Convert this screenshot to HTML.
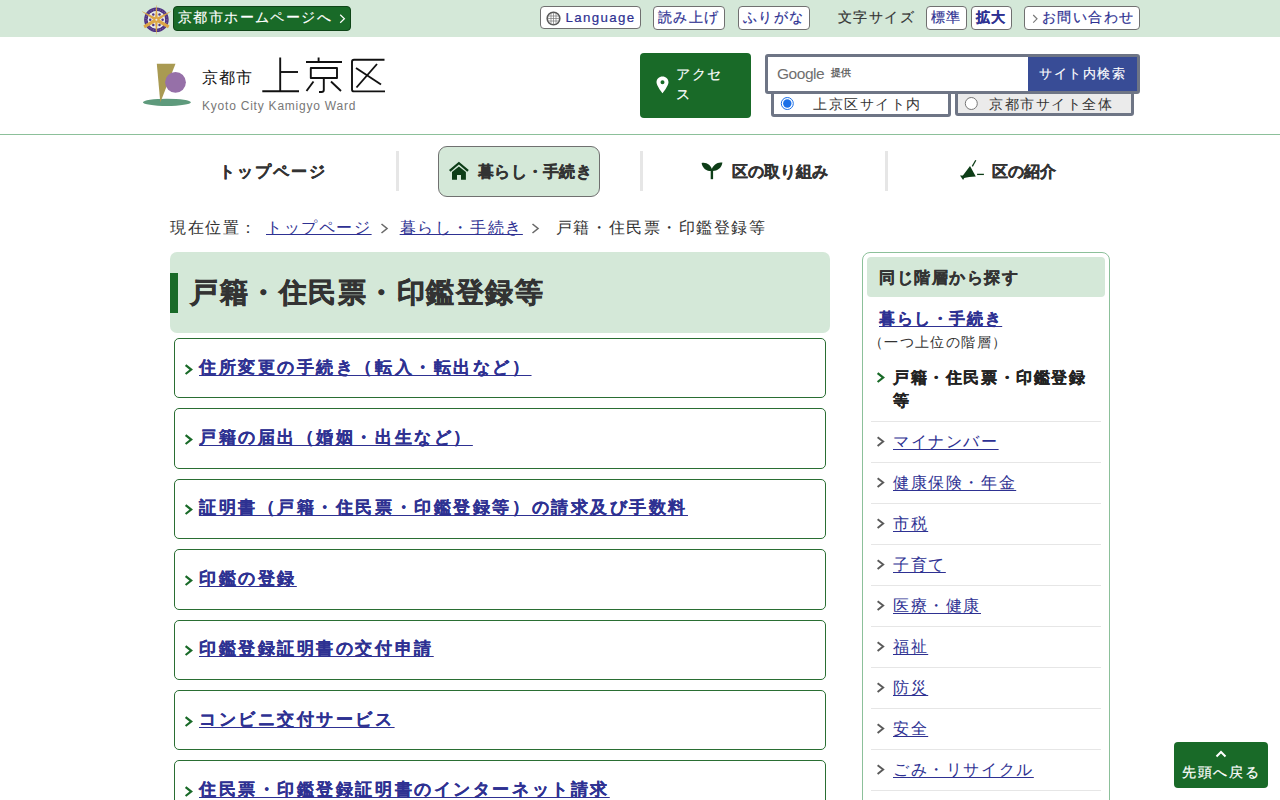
<!DOCTYPE html>
<html lang="ja">
<head>
<meta charset="utf-8">
<style>
*{box-sizing:border-box;margin:0;padding:0}
html,body{width:1280px;height:800px;overflow:hidden;background:#fff}
body{font-family:"Liberation Sans",sans-serif;color:#333;position:relative}
.abs{position:absolute}
#topbar{position:absolute;left:0;top:0;width:1280px;height:37px;background:#d4e8d8}
.tbtn{position:absolute;top:6px;height:24px;background:#fff;border:1px solid #707070;border-radius:4px;color:#2e3192;font-size:14px;letter-spacing:1.4px;line-height:21px;white-space:nowrap;-webkit-text-stroke:0.2px #2e3192}
#header{position:absolute;left:0;top:37px;width:1280px;height:98px;border-bottom:1px solid #8cc09a}
#nav{position:absolute;left:150px;top:135px;width:980px;height:70px}
.navc{position:absolute;top:0;height:70px;font-size:16px;font-weight:bold;color:#333;white-space:nowrap;-webkit-text-stroke:0.3px #333}
.sep{position:absolute;top:16px;width:3px;height:40px;background:#e6e6e6}
a{color:#2e3192}
#crumb{position:absolute;left:170px;top:214.5px;font-size:16px;letter-spacing:1.6px;line-height:26px;white-space:nowrap}
#crumb a{text-decoration:underline;text-underline-offset:1px;text-decoration-thickness:1.2px}
#crumb .gt{color:#707070;margin:0 4.5px 0 8.5px;letter-spacing:0}
#h1box{position:absolute;left:170px;top:252px;width:660px;height:81px;background:#d4e8d8;border-radius:7px}
#h1box .bar{position:absolute;left:0;top:21px;width:8px;height:40px;background:#196a28}
#h1box h1{position:absolute;left:20px;top:20px;font-size:27.5px;font-weight:bold;letter-spacing:1.55px;line-height:42px;color:#333;white-space:nowrap;-webkit-text-stroke:0.6px #333}
.lbox{position:absolute;left:174px;width:652px;height:60.4px;border:1px solid #2a6e33;border-radius:5px}
.lbox a{position:absolute;left:24px;top:15.7px;font-size:16.8px;font-weight:bold;letter-spacing:2.56px;line-height:26.4px;white-space:nowrap;color:#2e3192;text-decoration:underline;text-decoration-thickness:1.4px;text-underline-offset:2px;-webkit-text-stroke:0.15px #2e3192}
.chev{position:absolute}
#side{position:absolute;left:862px;top:252px;width:248px;height:600px;border:1px solid #8cc09a;border-radius:8px}
#side .hd{position:absolute;left:4px;top:4px;width:238px;height:40px;background:#d4e8d8;border-radius:4px;font-size:16px;font-weight:bold;letter-spacing:1.5px;line-height:41px;padding-left:12px;color:#333;-webkit-text-stroke:0.3px #333}
.sitem{position:absolute;left:8px;width:230px;border-bottom:1px solid #e6e6e6}
.sitem a{position:absolute;left:22px;font-size:16px;letter-spacing:1.6px;line-height:26px;white-space:nowrap;text-decoration:underline;text-underline-offset:2px;text-decoration-thickness:1.2px}
#totop{position:absolute;left:1174px;top:742px;width:94px;height:46px;background:#196a28;border-radius:4px;color:#fff;font-size:14px;letter-spacing:1.4px;-webkit-text-stroke:0.2px #fff}
</style>
</head>
<body>
<div id="topbar">
<svg class="abs" style="left:142px;top:5px" width="30" height="31" viewBox="0 0 30 31">
<circle cx="14.4" cy="14.75" r="10.5" fill="none" stroke="#4f3384" stroke-width="3.6"/>
<circle cx="14.4" cy="14.75" r="10.5" fill="none" stroke="#9a88a8" stroke-width="1.2" stroke-dasharray="0.8 1.6" opacity="0.6"/>
<circle cx="14.4" cy="14.75" r="8.7" fill="#e6eae8"/>
<g fill="#4f3384"><circle cx="20.60" cy="14.75" r="1.25"/><circle cx="17.50" cy="20.12" r="1.25"/><circle cx="11.30" cy="20.12" r="1.25"/><circle cx="8.20" cy="14.75" r="1.25"/><circle cx="11.30" cy="9.38" r="1.25"/><circle cx="17.50" cy="9.38" r="1.25"/></g>
<g fill="#dca646"><polygon points="15.90,14.75 14.50,0.00 14.30,-0.00 12.90,14.75"/><polygon points="12.90,14.75 14.30,29.50 14.50,29.50 15.90,14.75"/><polygon points="15.20,13.36 0.07,6.36 -0.03,6.54 13.60,16.14"/><polygon points="15.20,16.14 28.83,6.54 28.73,6.36 13.60,13.36"/><polygon points="13.60,13.36 1.35,20.55 2.85,23.15 15.20,16.14"/><polygon points="13.60,16.14 25.95,23.15 27.45,20.55 15.20,13.36"/></g>
<circle cx="14.4" cy="14.75" r="1" fill="#eee"/>
</svg>
<div class="abs" style="left:173px;top:6px;width:178px;height:25px;background:#196a28;border:1px solid #0f4518;border-radius:4px;color:#fff;font-size:14px;letter-spacing:1.4px;line-height:20px;padding-left:4px;white-space:nowrap;-webkit-text-stroke:0.15px #fff">京都市ホームページへ<svg style="position:absolute;left:165px;top:6.5px" width="7" height="10" viewBox="0 0 7 10"><path d="M1.2 0.8 L5.4 4.8 L1.2 8.8" fill="none" stroke="#fff" stroke-width="1.2"/></svg></div>
<div class="tbtn" style="left:540px;width:101px;height:23px;line-height:21px;padding-left:24.5px;font-family:'Liberation Sans',sans-serif;letter-spacing:1.35px;font-size:13.3px">Language
<svg style="position:absolute;left:5px;top:4px" width="15" height="15" viewBox="0 0 15 15"><circle cx="7.5" cy="7.5" r="6.3" fill="#fff" stroke="#555" stroke-width="1.6"/><g stroke="#777" stroke-width="0.7" fill="none"><line x1="1.5" y1="5" x2="13.5" y2="5"/><line x1="1.5" y1="7.5" x2="13.5" y2="7.5"/><line x1="1.5" y1="10" x2="13.5" y2="10"/><line x1="5" y1="1.5" x2="5" y2="13.5"/><line x1="7.5" y1="1.5" x2="7.5" y2="13.5"/><line x1="10" y1="1.5" x2="10" y2="13.5"/></g></svg></div>
<div class="tbtn" style="left:653px;width:72px;padding-left:4px">読み上げ</div>
<div class="tbtn" style="left:738px;width:72px;padding-left:4px">ふりがな</div>
<div class="abs" style="left:838px;top:6px;font-size:14px;letter-spacing:1.4px;line-height:22px;color:#333;white-space:nowrap;-webkit-text-stroke:0.2px #333">文字サイズ</div>
<div class="tbtn" style="left:926px;width:41px;padding-left:4px">標準</div>
<div class="tbtn" style="left:971px;width:41px;padding-left:4px;font-weight:bold">拡大</div>
<div class="tbtn" style="left:1024px;width:116px;padding-left:17px">お問い合わせ<svg style="position:absolute;left:7px;top:6.5px" width="7" height="10" viewBox="0 0 7 10"><path d="M1.2 1 L5 4.8 L1.2 8.6" fill="none" stroke="#777" stroke-width="1.15"/></svg></div>
</div>
<div id="header">
<svg class="abs" style="left:140px;top:23px" width="60" height="50" viewBox="140 60 60 50">
<ellipse cx="166.9" cy="102.3" rx="24" ry="3.6" fill="#5e9a7c"/>
<polygon points="156.8,63.8 175.5,63.8 160.3,102.5" fill="#a99a52"/>
<circle cx="175.5" cy="82.3" r="10.4" fill="#9670a8"/>
</svg>
<div class="abs" style="left:202px;top:28px;font-size:16px;line-height:26px;color:#111;white-space:nowrap;letter-spacing:1px">京都市</div>
<svg class="abs" style="left:258px;top:17px" width="132" height="42" viewBox="258 54 132 42" fill="none" stroke="#111" stroke-width="1.9" stroke-linecap="butt" stroke-linejoin="round">
<path d="M262.3 91.2 H299"/><path d="M280.2 57.5 V91"/><path d="M281 72 H298"/>
<path d="M318.6 57.5 V62"/><path d="M306 62 H342"/><path d="M310.8 68 H337 V78 H310.8 Z"/><path d="M323.8 78 V90 Q323.8 92 321.5 92 H319"/><path d="M313.5 81.5 L306.5 91"/><path d="M331 81.5 L341 91"/>
<path d="M384.5 59.7 H354 Q352 59.7 352 61.7 V89.4 Q352 91.4 354 91.4 H385"/><path d="M356 68 L381 84.5"/><path d="M377 64 L356.5 87.5"/>
</svg>
<div class="abs" style="left:202px;top:61px;font-size:12px;line-height:16px;color:#777;white-space:nowrap;letter-spacing:0.78px">Kyoto City Kamigyo Ward</div>
<div class="abs" style="left:640px;top:16px;width:111px;height:65px;background:#196a28;border-radius:4px;color:#fff;font-size:14px;letter-spacing:1.6px;line-height:20px">
<div class="abs" style="left:36px;top:11.3px;width:60px;white-space:normal;-webkit-text-stroke:0.2px #fff">アクセス</div>
<svg class="abs" style="left:15.8px;top:23.2px" width="13" height="18" viewBox="0 0 13 18"><path d="M6.5 0.5 C3 0.5 0.5 3.2 0.5 6.3 C0.5 10 6.5 17.3 6.5 17.3 C6.5 17.3 12.5 10 12.5 6.3 C12.5 3.2 10 0.5 6.5 0.5 Z M6.5 4.3 A2 2 0 1 1 6.5 8.3 A2 2 0 1 1 6.5 4.3 Z" fill="#fff" fill-rule="evenodd"/></svg>
</div>
<div class="abs" style="left:771px;top:54px;width:180px;height:26px;background:#fff;border:3px solid #6e7585;border-radius:3px"></div>
<div class="abs" style="left:955px;top:54px;width:179px;height:25px;background:#ebebeb;border:3px solid #6e7585;border-radius:3px"></div>
<div class="abs" style="left:765px;top:17px;width:375px;height:40px;background:#fff;border:3px solid #6e7585;border-radius:3px">
<div class="abs" style="left:9px;top:7px;font-size:15.5px;color:#6f6f6f;font-family:'Liberation Sans',sans-serif;letter-spacing:-0.45px;line-height:20px">Google</div>
<div class="abs" style="left:63px;top:9px;font-size:9.5px;color:#666;font-weight:bold;line-height:14px">提供</div>
<div class="abs" style="left:260px;top:0px;width:109px;height:34px;background:#384c96;color:#fff;font-size:13px;letter-spacing:1.5px;line-height:33px;text-align:center;padding-left:0;-webkit-text-stroke:0.15px #fff">サイト内検索</div>
</div>
<svg class="abs" style="left:780px;top:59px" width="15" height="15" viewBox="0 0 15 15"><circle cx="7.3" cy="7.5" r="6" fill="#fff" stroke="#1a6fe8" stroke-width="1"/><circle cx="7.3" cy="7.5" r="4.2" fill="#1a6fe8"/></svg>
<div class="abs" style="left:813px;top:57px;font-size:14px;letter-spacing:1.5px;line-height:20px;color:#333;white-space:nowrap">上京区サイト内</div>
<svg class="abs" style="left:964px;top:59px" width="15" height="15" viewBox="0 0 15 15"><circle cx="7.3" cy="7.5" r="6" fill="#fff" stroke="#777" stroke-width="1"/></svg>
<div class="abs" style="left:989px;top:57px;font-size:14px;letter-spacing:1.5px;line-height:20px;color:#333;white-space:nowrap">京都市サイト全体</div>
</div>
<div id="nav">
<div class="navc" style="left:0px;top:1.5px;width:246px;text-align:center;line-height:70px;letter-spacing:2px">トップページ</div>
<div class="sep" style="left:246px"></div>
<div class="abs" style="left:288px;top:11px;width:162px;height:51px;background:#d4e8d8;border:1px solid #707070;border-radius:9px"></div>
<svg class="abs" style="left:298px;top:26px" width="23" height="20" viewBox="0 0 23 20"><path d="M10.9 0.8 L20.8 8.9 L19.3 10.7 L10.9 3.6 L2.5 10.7 L1 8.9 Z" fill="#0d3d17"/><path d="M4 10.9 L10.9 5.6 L17.9 10.9 V18.8 H13 V13.9 H9 V18.8 H4 Z" fill="#0d3d17"/></svg>
<div class="navc" style="left:328px;top:1.5px;line-height:70px;letter-spacing:0.3px">暮らし・手続き</div>
<div class="sep" style="left:490px"></div>
<svg class="abs" style="left:551px;top:27px" width="23" height="19" viewBox="0 0 23 19"><path d="M10.9 8 V17.2" stroke="#0d3d17" stroke-width="2.4" fill="none"/><path d="M0.6 0.9 C5 -0.2 10.2 2.5 11.6 9 C6.5 9.6 1.6 7 0.6 0.9 Z" fill="#0d3d17"/><path d="M21.4 0.6 C17 -0.4 11.6 2.5 10.2 9 C15.5 9.6 20.5 6.8 21.4 0.6 Z" fill="#0d3d17"/></svg>
<div class="navc" style="left:582px;top:1.5px;line-height:70px">区の取り組み</div>
<div class="sep" style="left:735px"></div>
<svg class="abs" style="left:808px;top:23px" width="28" height="24" viewBox="0 0 28 24"><path d="M2 17.4 L4.9 17.4 L12 8.1 L17.8 18.4 C13 18.6 9 19.2 6.2 20 L5.1 22 Z" fill="#0d3d17"/><path d="M14.3 8.4 L17.8 2.3" stroke="#0d3d17" stroke-width="1.3"/><path d="M19.1 16.4 H25.9" stroke="#0d3d17" stroke-width="1.3"/></svg>
<div class="navc" style="left:842px;top:1.5px;line-height:70px">区の紹介</div>
</div>
<div id="crumb">現在位置：<a style="margin-left:8px">トップページ</a><span class="gt"><svg width="9" height="11" viewBox="0 0 9 11" style="vertical-align:-1px"><path d="M1.5 1 L7 5.5 L1.5 10" fill="none" stroke="#6a6a6a" stroke-width="1.6"/></svg></span> <a>暮らし・手続き</a><span class="gt"><svg width="9" height="11" viewBox="0 0 9 11" style="vertical-align:-1px"><path d="M1.5 1 L7 5.5 L1.5 10" fill="none" stroke="#6a6a6a" stroke-width="1.6"/></svg></span> <span style="letter-spacing:1.55px;margin-left:5px">戸籍・住民票・印鑑登録等</span></div>
<div id="h1box"><div class="bar"></div><h1>戸籍・住民票・印鑑登録等</h1></div>
<div class="lbox" style="top:338.0px"><svg class="chev" style="left:9px;top:24.5px" width="10" height="12" viewBox="0 0 10 12"><path d="M1.6 1.2 L7.2 5.6 L1.6 10" fill="none" stroke="#196a28" stroke-width="2.2"/></svg><a>住所変更の手続き（転入・転出など）</a></div>
<div class="lbox" style="top:408.4px"><svg class="chev" style="left:9px;top:24.5px" width="10" height="12" viewBox="0 0 10 12"><path d="M1.6 1.2 L7.2 5.6 L1.6 10" fill="none" stroke="#196a28" stroke-width="2.2"/></svg><a>戸籍の届出（婚姻・出生など）</a></div>
<div class="lbox" style="top:478.8px"><svg class="chev" style="left:9px;top:24.5px" width="10" height="12" viewBox="0 0 10 12"><path d="M1.6 1.2 L7.2 5.6 L1.6 10" fill="none" stroke="#196a28" stroke-width="2.2"/></svg><a>証明書（戸籍・住民票・印鑑登録等）の請求及び手数料</a></div>
<div class="lbox" style="top:549.2px"><svg class="chev" style="left:9px;top:24.5px" width="10" height="12" viewBox="0 0 10 12"><path d="M1.6 1.2 L7.2 5.6 L1.6 10" fill="none" stroke="#196a28" stroke-width="2.2"/></svg><a>印鑑の登録</a></div>
<div class="lbox" style="top:619.6px"><svg class="chev" style="left:9px;top:24.5px" width="10" height="12" viewBox="0 0 10 12"><path d="M1.6 1.2 L7.2 5.6 L1.6 10" fill="none" stroke="#196a28" stroke-width="2.2"/></svg><a>印鑑登録証明書の交付申請</a></div>
<div class="lbox" style="top:690.0px"><svg class="chev" style="left:9px;top:24.5px" width="10" height="12" viewBox="0 0 10 12"><path d="M1.6 1.2 L7.2 5.6 L1.6 10" fill="none" stroke="#196a28" stroke-width="2.2"/></svg><a>コンビニ交付サービス</a></div>
<div class="lbox" style="top:760.4px"><svg class="chev" style="left:9px;top:24.5px" width="10" height="12" viewBox="0 0 10 12"><path d="M1.6 1.2 L7.2 5.6 L1.6 10" fill="none" stroke="#196a28" stroke-width="2.2"/></svg><a>住民票・印鑑登録証明書のインターネット請求</a></div>
<div id="side"><div class="hd">同じ階層から探す</div>
<a class="abs" style="left:16px;top:53px;font-size:16px;font-weight:bold;letter-spacing:1.6px;line-height:26px;white-space:nowrap;text-decoration:underline;text-underline-offset:2px;text-decoration-thickness:1.3px;-webkit-text-stroke:0.2px #2e3192">暮らし・手続き</a>
<div class="abs" style="left:6px;top:79px;font-size:13.6px;letter-spacing:1.36px;line-height:22px;white-space:nowrap">（一つ上位の階層）</div>
<div class="sitem" style="top:108px;height:61px"><svg class="chev" style="left:5px;top:11px" width="10" height="12" viewBox="0 0 10 12"><path d="M1.6 1.2 L7.2 5.6 L1.6 10" fill="none" stroke="#196a28" stroke-width="2.2"/></svg><div class="abs" style="left:22px;top:5px;width:205px;font-size:16px;font-weight:bold;letter-spacing:1.6px;line-height:23px;color:#222;-webkit-text-stroke:0.25px #222">戸籍・住民票・印鑑登録等</div></div>
<div class="sitem" style="top:169px;height:41px"><svg class="chev" style="left:5px;top:13.5px" width="10" height="12" viewBox="0 0 10 12"><path d="M1.6 1.2 L7.2 5.6 L1.6 10" fill="none" stroke="#5a5a5a" stroke-width="1.9"/></svg><a style="top:7px">マイナンバー</a></div>
<div class="sitem" style="top:210px;height:41px"><svg class="chev" style="left:5px;top:13.5px" width="10" height="12" viewBox="0 0 10 12"><path d="M1.6 1.2 L7.2 5.6 L1.6 10" fill="none" stroke="#5a5a5a" stroke-width="1.9"/></svg><a style="top:7px">健康保険・年金</a></div>
<div class="sitem" style="top:251px;height:41px"><svg class="chev" style="left:5px;top:13.5px" width="10" height="12" viewBox="0 0 10 12"><path d="M1.6 1.2 L7.2 5.6 L1.6 10" fill="none" stroke="#5a5a5a" stroke-width="1.9"/></svg><a style="top:7px">市税</a></div>
<div class="sitem" style="top:292px;height:41px"><svg class="chev" style="left:5px;top:13.5px" width="10" height="12" viewBox="0 0 10 12"><path d="M1.6 1.2 L7.2 5.6 L1.6 10" fill="none" stroke="#5a5a5a" stroke-width="1.9"/></svg><a style="top:7px">子育て</a></div>
<div class="sitem" style="top:333px;height:41px"><svg class="chev" style="left:5px;top:13.5px" width="10" height="12" viewBox="0 0 10 12"><path d="M1.6 1.2 L7.2 5.6 L1.6 10" fill="none" stroke="#5a5a5a" stroke-width="1.9"/></svg><a style="top:7px">医療・健康</a></div>
<div class="sitem" style="top:374px;height:41px"><svg class="chev" style="left:5px;top:13.5px" width="10" height="12" viewBox="0 0 10 12"><path d="M1.6 1.2 L7.2 5.6 L1.6 10" fill="none" stroke="#5a5a5a" stroke-width="1.9"/></svg><a style="top:7px">福祉</a></div>
<div class="sitem" style="top:415px;height:41px"><svg class="chev" style="left:5px;top:13.5px" width="10" height="12" viewBox="0 0 10 12"><path d="M1.6 1.2 L7.2 5.6 L1.6 10" fill="none" stroke="#5a5a5a" stroke-width="1.9"/></svg><a style="top:7px">防災</a></div>
<div class="sitem" style="top:456px;height:41px"><svg class="chev" style="left:5px;top:13.5px" width="10" height="12" viewBox="0 0 10 12"><path d="M1.6 1.2 L7.2 5.6 L1.6 10" fill="none" stroke="#5a5a5a" stroke-width="1.9"/></svg><a style="top:7px">安全</a></div>
<div class="sitem" style="top:497px;height:41px"><svg class="chev" style="left:5px;top:13.5px" width="10" height="12" viewBox="0 0 10 12"><path d="M1.6 1.2 L7.2 5.6 L1.6 10" fill="none" stroke="#5a5a5a" stroke-width="1.9"/></svg><a style="top:7px">ごみ・リサイクル</a></div>
<div class="sitem" style="top:538px;height:41px"><svg class="chev" style="left:5px;top:13.5px" width="10" height="12" viewBox="0 0 10 12"><path d="M1.6 1.2 L7.2 5.6 L1.6 10" fill="none" stroke="#5a5a5a" stroke-width="1.9"/></svg><a style="top:7px">地域・コミュニティ</a></div>
</div>
<div id="totop"><svg class="abs" style="left:41px;top:8px" width="12" height="8" viewBox="0 0 12 8"><path d="M1.5 6.5 L6 2 L10.5 6.5" fill="none" stroke="#fff" stroke-width="2"/></svg><div class="abs" style="left:8px;top:20px;line-height:20px;white-space:nowrap;letter-spacing:1.7px">先頭へ戻る</div></div>
</body>
</html>
